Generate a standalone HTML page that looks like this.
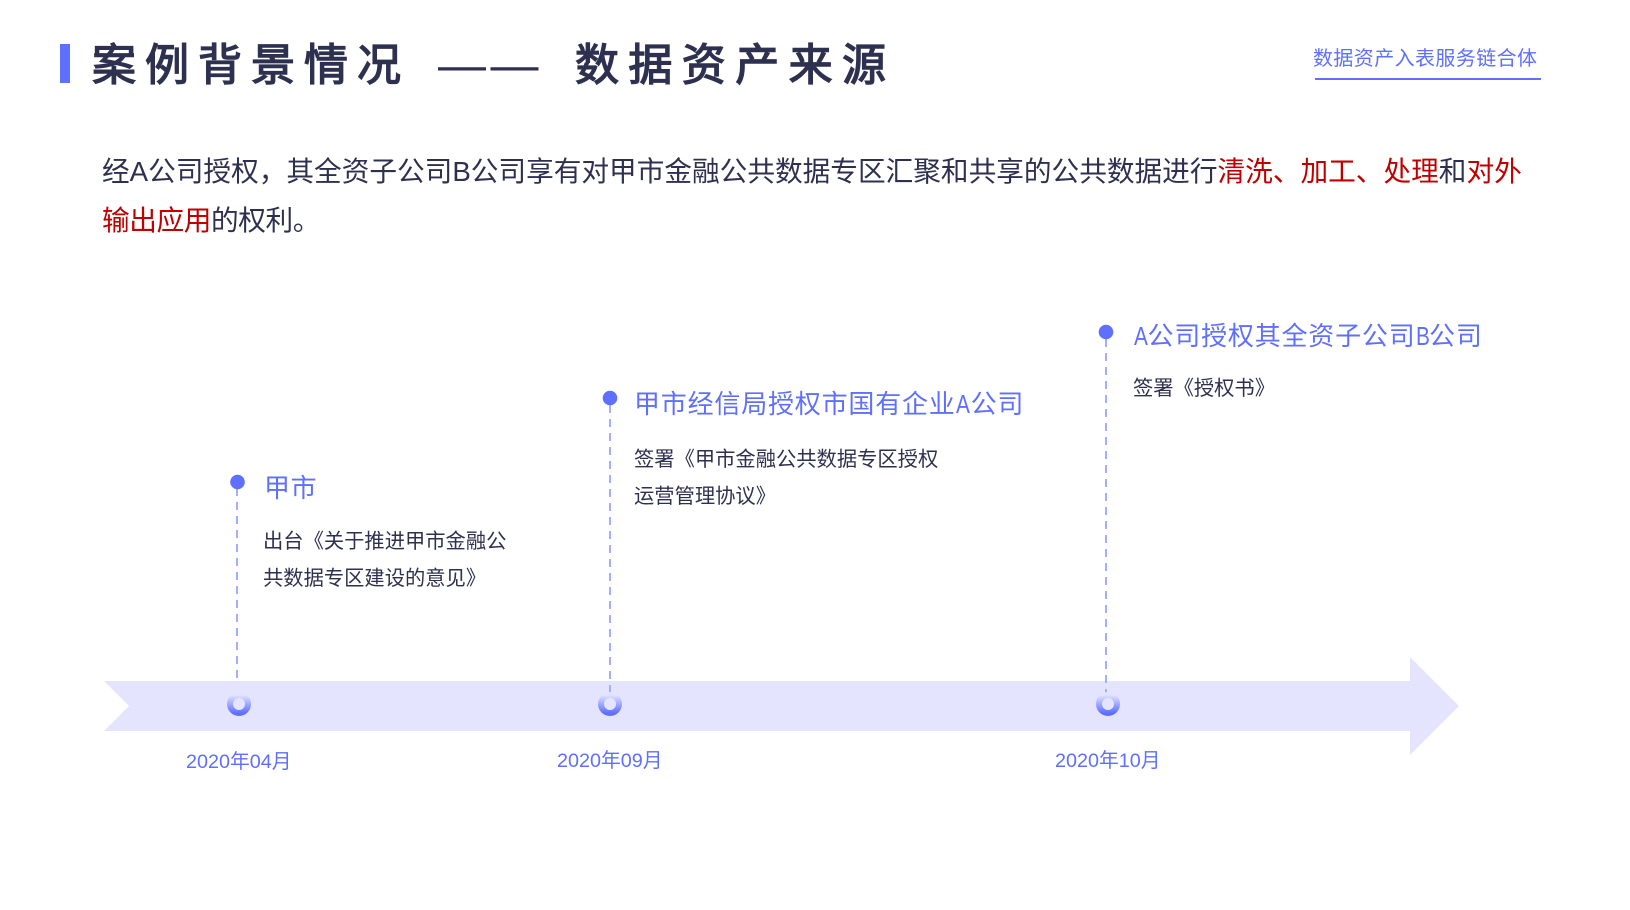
<!DOCTYPE html>
<html lang="zh">
<head>
<meta charset="utf-8">
<style>
html,body{margin:0;padding:0;background:#fff}
body{position:relative;width:1630px;height:910px;overflow:hidden;font-family:"Liberation Sans","WenQuanYi Zen Hei",sans-serif}
.t{position:absolute;white-space:nowrap;font-family:"WenQuanYi Zen Hei",sans-serif}
.title{top:36px;font-size:44px;line-height:60px;font-weight:700;letter-spacing:9px;color:#2e3050}
.link{left:1313px;top:44px;font-size:20px;line-height:30px;letter-spacing:.4px;color:#5f6fff}
.body{left:102px;font-size:27.67px;line-height:40px;color:#2e3050}
.body b{font-weight:400;color:#c00000}
.h{font-size:26px;line-height:36px;letter-spacing:.8px;color:#5f6fff}
.h i{display:inline-block;width:15px;font-style:normal;letter-spacing:0;transform:scaleX(.8);transform-origin:0 50%}
.d{font-size:20.3px;line-height:30px;color:#2e3050}
.date{position:absolute;white-space:nowrap;font-family:"Liberation Sans","WenQuanYi Zen Hei",sans-serif;font-size:19.8px;line-height:28px;color:#5f6fff}
svg{position:absolute;left:0;top:0}
</style>
</head>
<body>
<svg width="1630" height="910" viewBox="0 0 1630 910">
<defs>
<linearGradient id="g" x1="0" y1="0" x2="0" y2="1"><stop offset="0" stop-color="#e2e4ff"/><stop offset="1" stop-color="#5f6fff"/></linearGradient>
</defs>
<rect x="60" y="44" width="10" height="39" fill="#5f6fff"/>
<rect x="1315" y="78" width="226" height="2" fill="#5f6fff"/>
<polygon points="104,681 1410,681 1410,657 1459,706 1410,755 1410,731 104,731 129,706" fill="#e4e4ff"/>
<g stroke="#a5adff" stroke-width="2" stroke-dasharray="8 6" fill="none">
<line x1="237" y1="488" x2="237" y2="680"/>
<line x1="610" y1="405" x2="610" y2="697"/>
<line x1="1106" y1="339" x2="1106" y2="694"/>
</g>
<g fill="#5f6fff">
<circle cx="237.5" cy="482" r="7.3"/>
<circle cx="610" cy="398" r="7.3"/>
<circle cx="1106" cy="332" r="7.3"/>
</g>
<g fill="none" stroke="url(#g)" stroke-width="6">
<circle cx="239" cy="704" r="9"/>
<circle cx="610" cy="704" r="9"/>
<circle cx="1108" cy="704" r="9"/>
</g>
</svg>

<div class="t title" style="left:92px">案例背景情况</div>
<div class="t title" style="left:438px;font-size:48px;font-weight:400;letter-spacing:4.5px">——</div>
<div class="t title" style="left:575px;letter-spacing:9.4px">数据资产来源</div>
<div class="t link">数据资产入表服务链合体</div>

<div class="t body" style="top:152px">经A公司授权，其全资子公司B公司享有对甲市金融公共数据专区汇聚和共享的公共数据进行<b>清洗、加工、处理</b>和<b>对外</b></div>
<div class="t body" style="top:201px;letter-spacing:-.4px"><b>输出应用</b>的权利。</div>

<div class="t h" style="left:264px;top:470px;letter-spacing:.5px">甲市</div>
<div class="t d" style="left:263px;top:527px">出台《关于推进甲市金融公</div>
<div class="t d" style="left:263px;top:564px">共数据专区建设的意见》</div>

<div class="t h" style="left:634px;top:386px">甲市经信局授权市国有企业<i>A</i>公司</div>
<div class="t d" style="left:634px;top:445px">签署《甲市金融公共数据专区授权</div>
<div class="t d" style="left:634px;top:482px">运营管理协议》</div>

<div class="t h" style="left:1134px;top:318px"><i style="width:13.5px">A</i>公司授权其全资子公司<i style="width:13.5px">B</i>公司</div>
<div class="t d" style="left:1133px;top:374px">签署《授权书》</div>

<div class="date" style="left:186px;top:748px">2020年04月</div>
<div class="date" style="left:557px;top:747px">2020年09月</div>
<div class="date" style="left:1055px;top:747px">2020年10月</div>
</body>
</html>
